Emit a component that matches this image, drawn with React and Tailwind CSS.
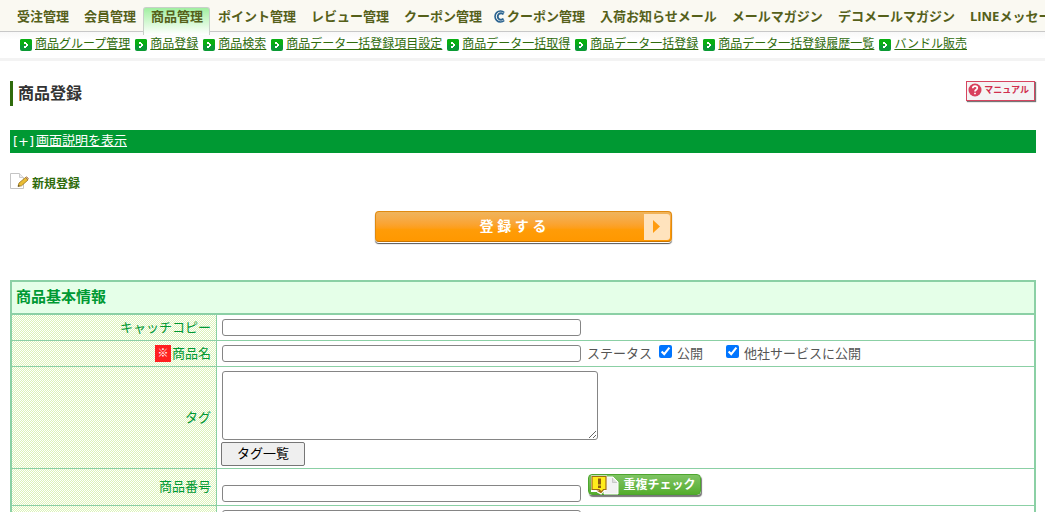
// src/App.jsx
import { useState } from "react";

const menus = [
  { label: "受注管理" },
  { label: "会員管理" },
  { label: "商品管理", active: true },
  { label: "ポイント管理" },
  { label: "レビュー管理" },
  { label: "クーポン管理" },
  { label: "クーポン管理", icon: true },
  { label: "入荷お知らせメール" },
  { label: "メールマガジン" },
  { label: "デコメールマガジン" },
  { label: "LINEメッセージ" },
];

const subMenus = [
  "商品グループ管理",
  "商品登録",
  "商品検索",
  "商品データ一括登録項目設定",
  "商品データ一括取得",
  "商品データ一括登録",
  "商品データ一括登録履歴一覧",
  "バンドル販売",
];

const textBox =
  "block h-[17px] w-[359px] rounded-[3px] border border-[#858585] bg-white px-1 text-[13px] text-black";

function CouponIcon() {
  return (
    <svg className="mr-px h-[13px] w-[13px] shrink-0" viewBox="0 0 13 13" fill="none">
      <path d="M11.3 2.5A5.500 5.500 0 1 0 11.3 10.500" stroke="#2a6390" strokeWidth="1.600" />
      <path d="M10.500 4.300A3.300 3.300 0 1 0 10.500 8.700" stroke="#2a6390" strokeWidth="1.900" />
    </svg>
  );
}

function ArrowIcon() {
  return (
    <svg className="mt-[3px] h-3 w-3 shrink-0" viewBox="0 0 12 12">
      <rect width="12" height="12" rx="2" fill="#0a9a34" />
      <path d="M0 6V2a2 2 0 0 1 2-2h8a2 2 0 0 1 2 2v4z" fill="#08ae12" />
      <path d="M4 3h2v1h1v1h1v2H7v1H6v1H4V7h2V5H4z" fill="#fff" />
    </svg>
  );
}

function EditIcon() {
  return (
    <svg className="h-4 w-[19px]" viewBox="0 0 19 16">
      <path d="M.5.5h9l4 4v11H.5z" fill="#fff" stroke="#c4c4c4" />
      <path d="M9.5.5v4h4" fill="#eee" stroke="#ccc" />
      <path d="M8 13.5l1-3.5 6.500-5.500 2.500 2.500-6.500 5.800z" fill="#e9bd35" stroke="#9b721a" strokeWidth=".8" />
      <path d="M15.500 4.500l1.200-.8 1.800 1.800-.8 1.300z" fill="#d9a79b" stroke="#9b721a" strokeWidth=".6" />
      <path d="M8 13.500l.5-1.700 1.300 1.300z" fill="#443" />
    </svg>
  );
}

function CheckIcon() {
  return (
    <svg className="h-5 w-[30px] shrink-0" viewBox="0 0 30 20">
      <path d="M15 2h9l5 5v12H15z" fill="#f2f2f2" stroke="#fff" />
      <path d="M23.500 3v4.500H28" fill="#ddd" stroke="#bbb" strokeWidth=".7" />
      <path d="M3 1.500h14v13l-3 1.500-2 2.500-3-1.500v-1H3z" fill="#fff48a" stroke="#fff" strokeWidth="2" />
      <path d="M3 1.500h14v13h-2.500l-2.500 3-2.500-1.500h2l-1.500-1.500H3z" fill="#ffec1c" stroke="#a06b10" strokeWidth="1.200" />
      <path d="M9 3.500h3v6H9zM9 10.500h3v2.500H9z" fill="#8a5a10" />
    </svg>
  );
}

function Header() {
  return (
    <header>
      <nav className="flex h-8 border-b border-[#c8c8c8] bg-[#faf9f2] pt-[7px] pl-[9px]">
        {menus.map((m, i) => (
          <a
            key={i}
            href="#"
            className={
              "flex h-7 shrink-0 items-start rounded-t-[3px] border-x border-t pr-[6px] pl-[7px] text-[13px] leading-4 font-bold whitespace-nowrap text-[#55601a] " +
              (m.active
                ? "border-[#c8d0c8] bg-linear-to-b from-[#a0efa0] to-white"
                : "border-transparent")
            }
          >
            {m.icon ? (
              <span className="-ml-1 flex items-center">
                <CouponIcon />
                {m.label}
              </span>
            ) : (
              m.label
            )}
          </a>
        ))}
      </nav>
      <nav className="flex h-[29px] gap-[5px] border-b-[3px] border-[#f3f3f3] bg-linear-to-b from-[#f8f8f8] to-white to-30% pt-1 pl-5">
        {subMenus.map((s) => (
          <div key={s} className="flex shrink-0 gap-[3px]">
            <ArrowIcon />
            <a href="#" className="text-xs leading-[15px] whitespace-nowrap text-[#2f6b0c] underline">
              {s}
            </a>
          </div>
        ))}
      </nav>
    </header>
  );
}

function Row({ id, label, required, children }) {
  return (
    <tr>
      <th className="border-t border-r border-[#8bd0a5] pr-[5px] pb-[2px] text-right align-middle font-normal text-[#009933]">
        {label && (
          <label htmlFor={id} className="inline-flex items-center">
            {required && (
              <span className="mr-px flex h-[17px] w-4 items-center justify-center bg-[#ff2020] text-[11px] text-white">
                ※
              </span>
            )}
            {label}
          </label>
        )}
      </th>
      <td className="border-t border-[#8bd0a5] pl-1">{children}</td>
    </tr>
  );
}

function App() {
  const [open, setOpen] = useState(true);
  const [other, setOther] = useState(true);

  return (
    <div className="overflow-x-hidden bg-white font-['Open_Sans','Noto_Sans_CJK_JP',sans-serif] text-[13px] leading-[18px] text-[#555]">
      <Header />

      <main className="pr-[9px] pl-[10px]">
        <div className="mt-5 flex items-start justify-between pr-px">
          <h1 className="border-l-[3px] border-[#2f6b0c] pl-[5px] text-base leading-[25px] font-bold text-[#333]">
            商品登録
          </h1>
          <button
            type="button"
            className="flex h-5 items-center gap-[2px] border border-[#d64560] bg-[#f4f4f4] pr-[5px] pb-[2px] pl-px text-[9px] font-bold text-[#d02f4d] shadow-[1px_1px_1px_#777]"
          >
            <svg className="h-[14px] w-[14px]" viewBox="0 0 14 14" fill="none">
              <circle cx="7" cy="7" r="6.500" fill="#d8405c" />
              <path d="M4.800 5.300c0-3 4.500-2.800 4.500-.2C9.300 6.800 7 6.600 7 8.400M7 9.700v1.600" stroke="#fff" strokeWidth="1.700" />
            </svg>
            マニュアル
          </button>
        </div>

        <div className="mt-6 flex h-[23px] gap-[2px] bg-[#009933] pl-[3px] leading-[21px] text-white">
          <span className="pt-px font-['DejaVu_Sans',sans-serif]">[+]</span>
          <a href="#" className="underline">
            画面説明を表示
          </a>
        </div>

        <div className="mt-5 flex h-5 gap-[3px] text-xs leading-[22px] font-bold text-[#2f6b0c]">
          <EditIcon />
          新規登録
        </div>

        <div className="mt-[18px] flex justify-center">
          <button
            type="submit"
            className="flex h-[31px] w-[297px] items-center rounded-[4px] border border-[#e08a10] border-b-[#c87400] bg-linear-to-b from-[#efb45c] via-[#ff9c08] via-60% to-[#ff9800] p-px text-sm font-bold text-white shadow-[0_1px_0_#fff,0_2px_1px_#555]"
          >
            <span className="flex-1 pb-[2px] pl-[6px]">登 録 す る</span>
            <span className="flex h-[26px] w-[26px] items-center justify-center rounded-r-[3px] bg-[#ffe3bd]">
              <svg className="h-[13px] w-[7px]" viewBox="0 0 7 13">
                <path d="M0 0l7 6.500L0 13z" fill="#ff9c10" />
              </svg>
            </span>
          </button>
        </div>

        <table className="mt-[38px] w-full table-fixed border-separate border-spacing-0 border-2 border-[#8bd0a5]">
          <colgroup>
            <col className="w-[205px] bg-[conic-gradient(#dcf3b8_25%,#fff_0_50%,#dcf3b8_0_75%,#fff_0)] bg-[length:2px_2px]" />
            <col />
          </colgroup>
          <thead>
            <tr>
              <th
                colSpan={2}
                className="h-8 border-b border-[#8bd0a5] bg-[#e5ffe8] pb-[3px] pl-1 text-left text-[15px] font-bold text-[#009933]"
              >
                商品基本情報
              </th>
            </tr>
          </thead>
          <tbody>
            <Row id="catch" label="キャッチコピー">
              <div className="flex h-[25px] items-center pl-px">
                <input id="catch" type="text" className={textBox} />
              </div>
            </Row>
            <Row id="name" label="商品名" required>
              <div className="flex h-[25px] items-start pt-[3px] pl-px whitespace-nowrap">
                <input id="name" type="text" className={textBox + " mt-px"} />
                <span className="ml-[6px]">ステータス</span>
                <label className="ml-[7px] flex items-center gap-[5px]">
                  <input
                    type="checkbox"
                    className="-mt-[3px] h-[13px] w-[13px] accent-[#0075ff]"
                    checked={open}
                    onChange={(e) => setOpen(e.target.checked)}
                  />
                  公開
                </label>
                <label className="ml-[23px] flex items-center gap-[5px]">
                  <input
                    type="checkbox"
                    className="-mt-[3px] h-[13px] w-[13px] accent-[#0075ff]"
                    checked={other}
                    onChange={(e) => setOther(e.target.checked)}
                  />
                  他社サービスに公開
                </label>
              </div>
            </Row>
            <Row id="tag" label="タグ">
              <textarea
                id="tag"
                className="mt-1 ml-px block h-[69px] w-[376px] resize rounded-[3px] border border-[#858585] bg-white p-1 text-black"
              />
              <button
                type="button"
                className="mt-[2px] mb-[2px] block h-6 w-[84px] rounded-[2px] border border-[#767676] bg-[#efefef] pb-[2px] leading-5 text-black"
              >
                タグ一覧
              </button>
            </Row>
            <Row id="code" label="商品番号">
              <div className="flex h-9 items-start pt-[5px] pl-px">
                <input id="code" type="text" className={textBox + " mt-[11px]"} />
                <button
                  type="button"
                  className="ml-[7px] flex h-[21px] w-[113px] items-center rounded-[4px] border border-[#4da62e] bg-linear-to-b from-[#7fc463] to-[#55ad2c] text-xs font-bold whitespace-nowrap text-white shadow-[1px_2px_1px_#777]"
                >
                  <CheckIcon />
                  <span className="flex-1">重複チェック</span>
                </button>
              </div>
            </Row>
            <Row>
              <div className="flex h-[25px] items-center pl-px">
                <input type="text" aria-label="商品番号2" className={textBox} />
              </div>
            </Row>
          </tbody>
        </table>
      </main>
    </div>
  );
}

export default App;
